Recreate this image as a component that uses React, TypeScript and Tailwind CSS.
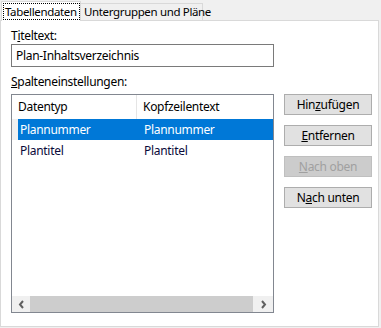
import React from "react";

const font =
  "font-['Segoe_UI','Noto_Sans',sans-serif] text-[12px] leading-[16px] tracking-[-0.3px] text-black whitespace-nowrap";

const buttons = [
  { pre: "Hin", key: "z", post: "ufügen", disabled: false },
  { pre: "", key: "E", post: "ntfernen", disabled: false },
  { pre: "", key: "N", post: "ach oben", disabled: true },
  { pre: "N", key: "a", post: "ch unten", disabled: false },
];

const rows = [
  { typ: "Plannummer", text: "Plannummer", selected: true },
  { typ: "Plantitel", text: "Plantitel", selected: false },
];

function Chevron({ dir }: { dir: "left" | "right" }) {
  return (
    <svg width="7" height="9" viewBox="0 0 7 9">
      <path
        d={dir === "left" ? "M5 1 L2 4.5 L5 8" : "M2 1 L5 4.5 L2 8"}
        fill="none"
        stroke="#606060"
        strokeWidth="2"
      />
    </svg>
  );
}

export default function App() {
  return (
    <div className={`w-[381px] h-[328px] bg-[#f0f0f0] ${font}`}>
      {/* Tabs */}
      <div className="flex items-end h-[20px] pl-[1px] text-[11.5px] tracking-[-0.35px]">
        <div className="relative z-10 -mb-px h-[20px] w-[80px] shrink-0 bg-white border border-b-0 border-[#d9d9d9] flex items-center pl-[1px]">
          <span className="border border-dotted border-black h-[17px] w-[77px] flex items-center pl-[1px]">
            Tabellendaten
          </span>
        </div>
        <div className="h-[17px] w-[122px] shrink-0 bg-[#f0f0f0] border border-b-0 border-l-0 border-[#d9d9d9] flex items-center pl-[3px]">
          Untergruppen und Pläne
        </div>
      </div>

      {/* Panel */}
      <div className="w-[379px] h-[307px] bg-white border border-[#d9d9d9] pl-[10px] pt-[7px]">
        <div>
          T<span className="underline underline-offset-1">i</span>teltext:
        </div>
        <div className="w-[263px] h-[23px] border border-[#7a7a7a] flex items-center px-[4px]">
          Plan-Inhaltsverzeichnis
        </div>
        <div className="mt-[7px]">
          <span className="underline underline-offset-1">S</span>palteneinstellungen:
        </div>

        <div className="flex mt-[4px]">
          {/* List view */}
          <div className="w-[263px] h-[219px] border border-[#828790] flex flex-col">
            <div className="flex h-[24px] items-center">
              <div className="w-[125px] h-full border-r border-[#e5e5e5] flex items-center pl-[6px]">
                Datentyp
              </div>
              <div className="flex-1 pl-[6px]">Kopfzeilentext</div>
            </div>
            <div className="flex-1">
              {rows.map((r) => (
                <div key={r.typ} className="flex h-[21px]">
                  <div className={`w-[6px] ${r.selected ? "bg-[#f0f0f0]" : ""}`} />
                  <div
                    className={`flex flex-1 items-center ${
                      r.selected ? "bg-[#0078d7] text-white" : "text-[#0a0a3a]"
                    }`}
                  >
                    <div className="w-[125px] pl-[2px]">{r.typ}</div>
                    <div className="flex-1 pl-[1px]">{r.text}</div>
                  </div>
                </div>
              ))}
            </div>
            {/* Horizontal scrollbar */}
            <div className="h-[16px] flex bg-[#f0f0f0]">
              <div className="w-[18px] flex items-center justify-center">
                <Chevron dir="left" />
              </div>
              <div className="flex-1 bg-[#cdcdcd]" />
              <div className="w-[20px] flex items-center justify-center">
                <Chevron dir="right" />
              </div>
            </div>
          </div>

          {/* Buttons */}
          <div className="ml-[10px] flex flex-col gap-[10px]">
            {buttons.map((b) => (
              <div
                key={b.pre + b.key + b.post}
                className={`w-[88px] h-[21px] border flex items-center justify-center ${
                  b.disabled
                    ? "bg-[#cccccc] border-[#bfbfbf] text-[#a0a0a0]"
                    : "bg-[#e1e1e1] border-[#adadad]"
                }`}
              >
                <span>
                  {b.pre}
                  <span className="underline underline-offset-1">{b.key}</span>
                  {b.post}
                </span>
              </div>
            ))}
          </div>
        </div>
      </div>
    </div>
  );
}
